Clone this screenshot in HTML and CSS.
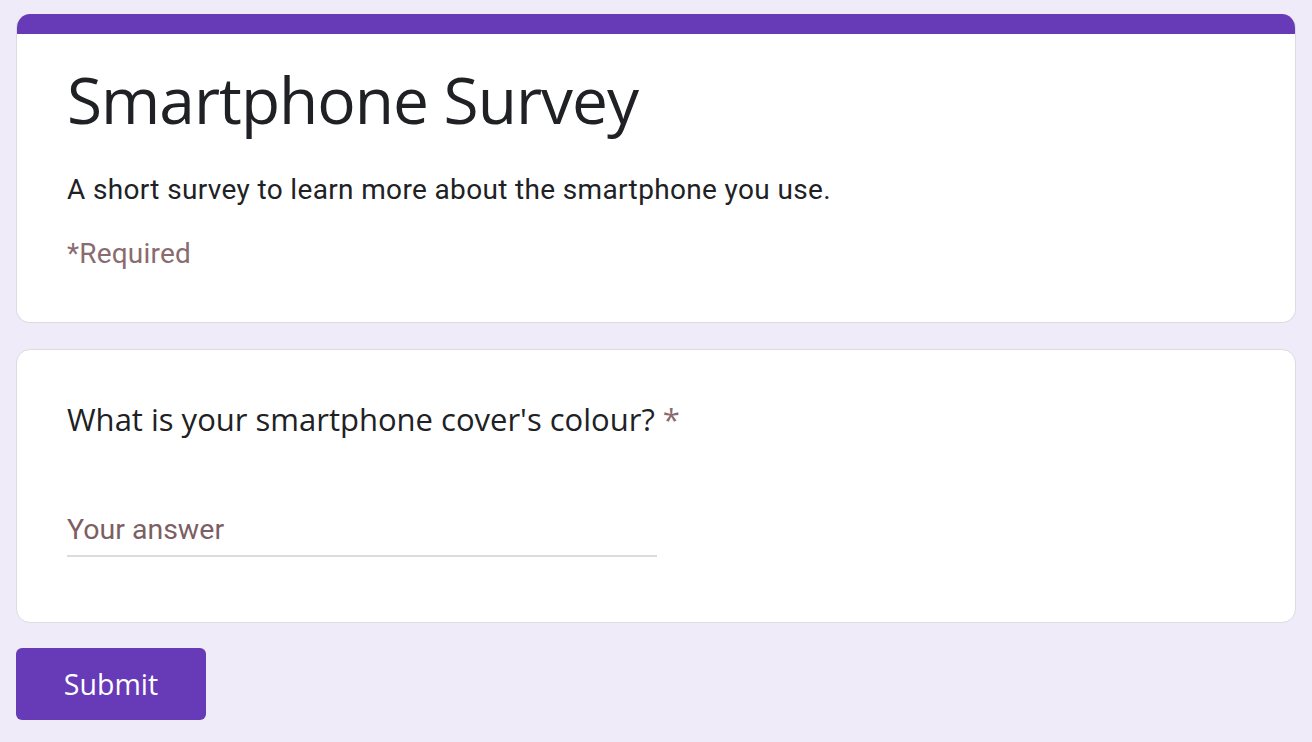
FILE: index.html
```html
<!DOCTYPE html>
<html lang="en">
<head>
<meta charset="utf-8">
<title>Smartphone Survey</title>
<link rel="stylesheet" href="styles.css">
</head>
<body>
<main class="form">
  <section class="card header-card">
    <div class="band"></div>
    <div class="card-body header-body">
      <h1 class="title">Smartphone Survey</h1>
      <p class="desc">A short survey to learn more about the smartphone you use.</p>
      <p class="req">*Required</p>
    </div>
  </section>
  <section class="card question-card">
    <div class="card-body q-body">
      <div class="question">What is your smartphone cover's colour? <span class="star">*</span></div>
      <div class="answer"><span class="placeholder">Your answer</span></div>
    </div>
  </section>
  <div class="actions">
    <button class="submit" type="button">Submit</button>
  </div>
</main>
</body>
</html>
```
FILE: styles.css
```css
html, body {
  margin: 0;
  padding: 0;
  background: #f0ebf8;
}
body {
  padding: 14px 16px 0 16px;
}
.form {
  display: flex;
  flex-direction: column;
  gap: 26px;
}
.card {
  background: #fff;
  border: 1.5px solid #dadce0;
  border-radius: 14px;
  overflow: hidden;
}
.header-card {
  border-top: none;
  height: 309px;
  box-sizing: border-box;
}
.band {
  height: 20px;
  background: #673ab7;
}
.card-body {
  padding: 0 50px;
}
.header-body {
  padding-top: 30px;
}
.title {
  margin: 0;
  font-family: "Open Sans", sans-serif;
  font-weight: 400;
  font-size: 64px;
  line-height: 72px;
  color: #202124;
  letter-spacing: -1px;
}
.desc {
  margin: 38px 0 0 0;
  font-family: Roboto, sans-serif;
  font-size: 28px;
  line-height: 32px;
  letter-spacing: 0.35px;
  color: #202124;
}
.req {
  margin: 31.5px 0 0 0;
  font-family: Roboto, sans-serif;
  font-size: 28px;
  line-height: 32px;
  letter-spacing: 0.2px;
  color: #8a6c70;
}
.question-card {
  height: 274px;
  box-sizing: border-box;
}
.q-body {
  padding-top: 48.5px;
}
.question {
  font-family: "Open Sans", sans-serif;
  font-size: 31px;
  line-height: 40px;
  color: #202124;
}
.star {
  color: #8a6c70;
}
.answer {
  margin-top: 75px;
  width: 590px;
  border-bottom: 2px solid #dadce0;
  padding-bottom: 9.5px;
}
.placeholder {
  display: block;
  font-family: Roboto, sans-serif;
  font-size: 28.5px;
  line-height: 32px;
  color: #7d5f63;
}
.actions {
  display: flex;
  margin-top: -1px;
}
.submit {
  width: 190px;
  height: 72px;
  border: none;
  border-radius: 6px;
  background: #673ab7;
  color: #fff;
  font-family: "Open Sans", sans-serif;
  font-weight: 500;
  font-size: 28.5px;
  padding: 0;
  cursor: pointer;
}
```
